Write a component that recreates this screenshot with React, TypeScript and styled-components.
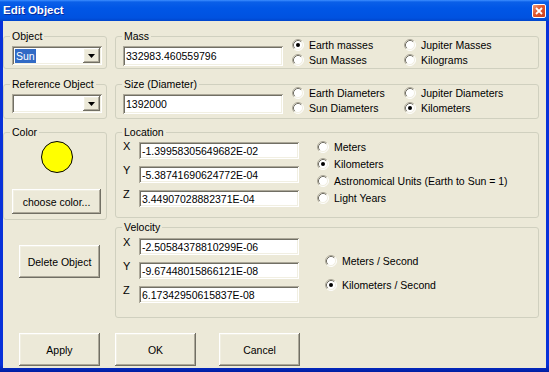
import React from 'react';
import styled, { createGlobalStyle } from 'styled-components';

const FONT = `"Liberation Sans", Arial, sans-serif`;

const GlobalStyle = createGlobalStyle`
    * { box-sizing: border-box; }
    body {
        margin: 0;
        background: #ffffff;
    }
`;

const raised = `
    inset -1px -1px #716f64,
    inset 1px 1px #ffffff,
    inset -2px -2px #aca899,
    inset 2px 2px #f1efe2
`;

const sunken = `
    inset 1px 1px #aca899,
    inset -1px -1px #ffffff,
    inset 2px 2px #716f64,
    inset -2px -2px #f1efe2
`;

const Window = styled.div`
    width: 549px;
    height: 372px;
    display: flex;
    flex-direction: column;
    background: linear-gradient(to bottom, #0831d9 0, #0831d9 98%, #001ea0 100%);
    font-family: ${FONT};
    font-size: 10.5px;
    color: #000;
    overflow: hidden;
`;

const TitleBar = styled.div`
    height: 21px;
    flex: none;
    display: flex;
    align-items: flex-start;
    justify-content: space-between;
    padding: 0 3px 0 3px;
    background: linear-gradient(to bottom, #3d8eff 0, #0a5fe8 2px, #0056e6 40%, #0052e0 85%, #0045cc 100%);
`;

const Title = styled.span`
    color: #fff;
    font-weight: bold;
    font-size: 11.5px;
    line-height: 21px;
    text-shadow: 1px 1px 0 #0a2a9c;
`;

const CloseButton = styled.div`
    width: 14px;
    height: 14px;
    margin-top: 4px;
    border: 1px solid #fff;
    border-radius: 2px;
    background: linear-gradient(135deg, #f09a78 0, #e0562e 45%, #c8401c 100%);
    display: flex;
    align-items: center;
    justify-content: center;
`;

const Client = styled.div`
    flex: 1;
    margin: 0 3px 4px;
    background: #ece9d8;
    padding: 15px 7px 0 0;
    display: flex;
    flex-direction: column;
`;

const Columns = styled.div`
    display: grid;
    grid-template-columns: 104px 424px;
    column-gap: 8px;
    align-items: start;
`;

const Column = styled.div`
    display: flex;
    flex-direction: column;
`;

const GroupBox = styled.div<{ $h: number; $mt?: number }>`
    position: relative;
    height: ${p => p.$h}px;
    margin-top: ${p => p.$mt ?? 0}px;
    border: 1px solid #d0d0bf;
    border-radius: 3px;
    flex: none;
`;

const Caption = styled.span`
    position: absolute;
    top: -7px;
    left: 6px;
    padding: 0 2px;
    background: #ece9d8;
    line-height: 13px;
    white-space: nowrap;
`;

const ComboSlot = styled.div`
    padding: 9px 0 0 8px;
`;

const Combo = styled.div`
    width: 90px;
    height: 19px;
    background: #fff;
    box-shadow: ${sunken};
    display: flex;
    align-items: center;
    padding: 2px;
`;

const ComboText = styled.div`
    flex: 1;
    display: flex;
    align-items: center;
    padding-left: 1px;
`;

const Selected = styled.span`
    background: #316ac5;
    color: #fff;
    line-height: 14px;
    padding: 0 1px;
`;

const DropButton = styled.div`
    width: 17px;
    height: 15px;
    background: #ece9d8;
    box-shadow: ${raised};
    display: flex;
    align-items: center;
    justify-content: center;
`;

const Row = styled.div`
    display: flex;
    align-items: flex-start;
`;

const InputSlot = styled.div`
    padding: 9px 0 0 7px;
`;

const TextBox = styled.div<{ $w: number; $h: number }>`
    width: ${p => p.$w}px;
    height: ${p => p.$h}px;
    background: #fff;
    box-shadow: ${sunken};
    display: flex;
    align-items: center;
    padding: 0 3px;
    white-space: nowrap;
    overflow: hidden;
`;

const RadioGrid = styled.div<{ $cols: string; $row: number; $top: number; $left: number }>`
    display: grid;
    grid-template-columns: ${p => p.$cols};
    grid-auto-rows: ${p => p.$row}px;
    padding-top: ${p => p.$top}px;
    margin-left: ${p => p.$left}px;
`;

const RadioRow = styled.label`
    display: flex;
    align-items: center;
    gap: 5px;
    white-space: nowrap;
`;

const CoordList = styled.div<{ $top: number }>`
    display: flex;
    flex-direction: column;
    gap: 7px;
    padding: ${p => p.$top}px 0 0 7px;
`;

const CoordRow = styled.div`
    display: flex;
    align-items: flex-start;
`;

const AxisLabel = styled.span`
    width: 16px;
    line-height: 12px;
    margin-top: -2px;
    font-size: 11px;
`;

const ColorBody = styled.div`
    display: flex;
    flex-direction: column;
    align-items: center;
    padding: 8px 0 0 3px;
    gap: 16px;
`;

const Swatch = styled.div<{ $color: string }>`
    width: 32px;
    height: 32px;
    border-radius: 50%;
    background: ${p => p.$color};
    border: 1px solid #000;
`;

const Button = styled.div<{ $w: number; $h: number; $ml?: number; $mt?: number }>`
    width: ${p => p.$w}px;
    height: ${p => p.$h}px;
    margin-left: ${p => p.$ml ?? 0}px;
    margin-top: ${p => p.$mt ?? 0}px;
    background: #ece9d8;
    box-shadow: ${raised};
    display: flex;
    align-items: center;
    justify-content: center;
    white-space: nowrap;
    flex: none;
`;

const ButtonRow = styled.div`
    display: flex;
    margin-top: 15px;
    padding-left: 16px;
    gap: 15px;
`;

const RadioIcon: React.FC<{ checked?: boolean }> = ({ checked }) => (
    <svg width="12" height="12" viewBox="0 0 12 12">
        <circle cx="6" cy="6" r="5" fill="#fff" />
        <path d="M2.11 9.89 A5.5 5.5 0 0 1 9.89 2.11" fill="none" stroke="#aca899" strokeWidth="1" />
        <path d="M2.82 9.18 A4.5 4.5 0 0 1 9.18 2.82" fill="none" stroke="#716f64" strokeWidth="1" />
        <path d="M9.89 2.11 A5.5 5.5 0 0 1 2.11 9.89" fill="none" stroke="#ffffff" strokeWidth="1" />
        <path d="M9.18 2.82 A4.5 4.5 0 0 1 2.82 9.18" fill="none" stroke="#f1efe2" strokeWidth="1" />
        {checked && <circle cx="6" cy="6" r="2" fill="#000" />}
    </svg>
);

const Radio: React.FC<{ label: string; checked?: boolean }> = ({ label, checked }) => (
    <RadioRow>
        <RadioIcon checked={checked} />
        <span>{label}</span>
    </RadioRow>
);

const ComboBox: React.FC<{ value?: string }> = ({ value }) => (
    <Combo>
        <ComboText>{value && <Selected>{value}</Selected>}</ComboText>
        <DropButton>
            <svg width="7" height="4" viewBox="0 0 7 4">
                <polygon points="0,0 7,0 3.5,4" fill="#000" />
            </svg>
        </DropButton>
    </Combo>
);

const Coords: React.FC<{ top: number; values: string[] }> = ({ top, values }) => (
    <CoordList $top={top}>
        {['X', 'Y', 'Z'].map((axis, i) => (
            <CoordRow key={axis}>
                <AxisLabel>{axis}</AxisLabel>
                <TextBox $w={160} $h={17}>{values[i]}</TextBox>
            </CoordRow>
        ))}
    </CoordList>
);

const App: React.FC = () => {
    return (
        <>
            <GlobalStyle />
            <Window>
                <TitleBar>
                    <Title>Edit Object</Title>
                    <CloseButton>
                        <svg width="8" height="8" viewBox="0 0 8 8">
                            <path d="M1 1 L7 7 M7 1 L1 7" stroke="#fff" strokeWidth="1.8" />
                        </svg>
                    </CloseButton>
                </TitleBar>
                <Client>
                    <Columns>
                        <Column>
                            <GroupBox $h={33}>
                                <Caption>Object</Caption>
                                <ComboSlot><ComboBox value="Sun" /></ComboSlot>
                            </GroupBox>
                            <GroupBox $h={35} $mt={15}>
                                <Caption>Reference Object</Caption>
                                <ComboSlot><ComboBox /></ComboSlot>
                            </GroupBox>
                            <GroupBox $h={88} $mt={13}>
                                <Caption>Color</Caption>
                                <ColorBody>
                                    <Swatch $color="#ffff00" />
                                    <Button $w={89} $h={25}>choose color...</Button>
                                </ColorBody>
                            </GroupBox>
                            <Button $w={81} $h={33} $ml={16} $mt={25}>Delete Object</Button>
                        </Column>
                        <Column>
                            <GroupBox $h={33}>
                                <Caption>Mass</Caption>
                                <Row>
                                    <InputSlot>
                                        <TextBox $w={160} $h={20}>332983.460559796</TextBox>
                                    </InputSlot>
                                    <RadioGrid $cols="112px auto" $row={15} $top={0} $left={9}>
                                        <Radio label="Earth masses" checked />
                                        <Radio label="Jupiter Masses" />
                                        <Radio label="Sun Masses" />
                                        <Radio label="Kilograms" />
                                    </RadioGrid>
                                </Row>
                            </GroupBox>
                            <GroupBox $h={35} $mt={15}>
                                <Caption>Size (Diameter)</Caption>
                                <Row>
                                    <InputSlot>
                                        <TextBox $w={160} $h={20}>1392000</TextBox>
                                    </InputSlot>
                                    <RadioGrid $cols="112px auto" $row={15} $top={0} $left={9}>
                                        <Radio label="Earth Diameters" />
                                        <Radio label="Jupiter Diameters" />
                                        <Radio label="Sun Diameters" />
                                        <Radio label="Kilometers" checked />
                                    </RadioGrid>
                                </Row>
                            </GroupBox>
                            <GroupBox $h={86} $mt={13}>
                                <Caption>Location</Caption>
                                <Row>
                                    <Coords
                                        top={9}
                                        values={['-1.39958305649682E-02', '-5.38741690624772E-04', '3.44907028882371E-04']}
                                    />
                                    <RadioGrid $cols="auto" $row={17} $top={5} $left={18}>
                                        <Radio label="Meters" />
                                        <Radio label="Kilometers" checked />
                                        <Radio label="Astronomical Units (Earth to Sun = 1)" />
                                        <Radio label="Light Years" />
                                    </RadioGrid>
                                </Row>
                            </GroupBox>
                            <GroupBox $h={91} $mt={9}>
                                <Caption>Velocity</Caption>
                                <Row>
                                    <Coords
                                        top={10}
                                        values={['-2.50584378810299E-06', '-9.67448015866121E-08', '6.17342950615837E-08']}
                                    />
                                    <RadioGrid $cols="auto" $row={24} $top={21} $left={26}>
                                        <Radio label="Meters / Second" />
                                        <Radio label="Kilometers / Second" checked />
                                    </RadioGrid>
                                </Row>
                            </GroupBox>
                        </Column>
                    </Columns>
                    <ButtonRow>
                        <Button $w={81} $h={33}>Apply</Button>
                        <Button $w={81} $h={33}>OK</Button>
                        <Button $w={81} $h={33} $ml={8}>Cancel</Button>
                    </ButtonRow>
                </Client>
            </Window>
        </>
    );
};

export default App;
